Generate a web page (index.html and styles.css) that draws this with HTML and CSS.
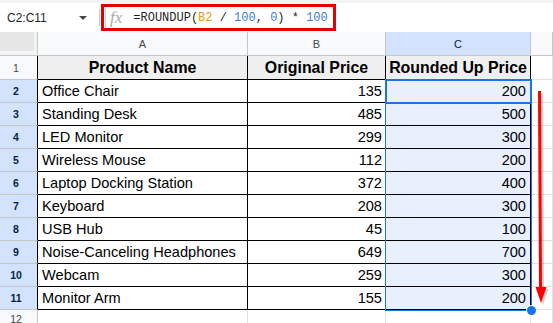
FILE: index.html
```html
<!DOCTYPE html>
<html>
<head>
<meta charset="utf-8">
<link rel="stylesheet" href="styles.css">
</head>
<body>
<div class="strip"></div>
<div class="fbar">
  <div class="namebox"><span class="ref">C2:C11</span><span class="caret"></span></div>
  <div class="sep"></div>
  <div class="formula">
    <span class="fsep"></span>
    <span class="fx">fx</span>
    <span class="expr">=ROUNDUP(<span class="ro">B2</span> / <span class="num">100</span>, <span class="num">0</span>) * <span class="num">100</span></span>
  </div>
</div>
<div class="sheet">
  <div class="corner"></div><div class="ch">A</div><div class="ch">B</div><div class="ch sel">C</div><div class="ch"></div>

  <div class="rh">1</div><div class="c hd">Product Name</div><div class="c hd">Original Price</div><div class="c hd">Rounded Up Price</div><div class="e"></div>

  <div class="rh sel">2</div><div class="c">Office Chair</div><div class="c n">135</div><div class="c n s">200</div><div class="e"></div>
  <div class="rh sel">3</div><div class="c">Standing Desk</div><div class="c n">485</div><div class="c n s">500</div><div class="e"></div>
  <div class="rh sel">4</div><div class="c">LED Monitor</div><div class="c n">299</div><div class="c n s">300</div><div class="e"></div>
  <div class="rh sel">5</div><div class="c">Wireless Mouse</div><div class="c n">112</div><div class="c n s">200</div><div class="e"></div>
  <div class="rh sel">6</div><div class="c">Laptop Docking Station</div><div class="c n">372</div><div class="c n s">400</div><div class="e"></div>
  <div class="rh sel">7</div><div class="c">Keyboard</div><div class="c n">208</div><div class="c n s">300</div><div class="e"></div>
  <div class="rh sel">8</div><div class="c">USB Hub</div><div class="c n">45</div><div class="c n s">100</div><div class="e"></div>
  <div class="rh sel">9</div><div class="c">Noise-Canceling Headphones</div><div class="c n">649</div><div class="c n s">700</div><div class="e"></div>
  <div class="rh sel">10</div><div class="c">Webcam</div><div class="c n">259</div><div class="c n s">300</div><div class="e"></div>
  <div class="rh sel">11</div><div class="c">Monitor Arm</div><div class="c n">155</div><div class="c n s">200</div><div class="e"></div>

  <div class="rh last">12</div><div class="e"></div><div class="e"></div><div class="e"></div><div class="e"></div>

  <div class="range"></div>
  <div class="active"></div>
  <div class="handle"></div>
  <svg class="arrow" width="23" height="220" viewBox="0 0 23 220">
    <g fill="rgba(0,0,0,0.18)">
      <polygon points="10,5 13,5 14,201 11,201"/>
      <polygon points="7.5,201 18.5,201 13,217"/>
    </g>
    <g fill="#f00">
      <polygon points="8,3 11,3 12,200 9,200"/>
      <polygon points="5.5,199 16.5,199 11,215"/>
    </g>
  </svg>
</div>
</body>
</html>
```

FILE: styles.css
```css
html, body {
  margin: 0;
  padding: 0;
  background: #fff;
}
body {
  width: 553px;
  height: 323px;
  overflow: hidden;
  font-family: "Liberation Sans", Arial, sans-serif;
  color: #000;
}
.strip {
  height: 3px;
  background: #f1f3f4;
}
.fbar {
  height: 29px;
  display: flex;
  align-items: flex-start;
  background: #fff;
}
.namebox {
  width: 99px;
  height: 29px;
  box-sizing: border-box;
  padding: 0 12px 0 7px;
  display: flex;
  align-items: center;
}
.ref {
  font-size: 12px;
  color: #1f1f1f;
}
.caret {
  margin-left: auto;
  width: 0;
  height: 0;
  border-left: 4px solid transparent;
  border-right: 4px solid transparent;
  border-top: 4px solid #444746;
}
.sep {
  width: 1px;
  height: 17px;
  margin-top: 6px;
  background: #c4c7c5;
}
.formula {
  margin-left: 1px;
  margin-top: 1px;
  width: 235px;
  height: 27px;
  box-sizing: border-box;
  border: 3px solid #e20000;
  display: flex;
  align-items: center;
}
.fsep {
  width: 1px;
  height: 21px;
  margin-left: 1px;
  background: #d0d0d0;
}
.fx {
  margin-left: 4px;
  font-family: "Liberation Serif", "Times New Roman", serif;
  font-style: italic;
  font-size: 17px;
  color: #a9a9a9;
  line-height: 21px;
}
.expr {
  margin-left: 11px;
  font-family: "Liberation Mono", "Courier New", monospace;
  font-size: 12px;
  color: #1f1f1f;
  white-space: pre;
}
.ro { color: #f0961e; }
.num { color: #3d7bd9; }

.sheet {
  position: relative;
  display: grid;
  grid-template-columns: 38px 210px 138px 145px 1fr;
  grid-template-rows: 24px 24px repeat(10, 23px) 23px;
}
.sheet > div {
  box-sizing: border-box;
  overflow: hidden;
  white-space: nowrap;
}
.corner {
  background: #e6e6e6;
  border-right: 1px solid #c4c7c5;
  border-bottom: 1px solid #c4c7c5;
  box-shadow: inset -3px -4px 0 #f3f3f3;
}
.ch {
  background: #f8f9fa;
  border-right: 1px solid #c4c7c5;
  border-bottom: 1px solid #c4c7c5;
  font-size: 11px;
  color: #444746;
  display: flex;
  align-items: center;
  justify-content: center;
}
.ch.sel {
  background: #d3e3fd;
  color: #041e49;
}
.rh {
  background: #f8f9fa;
  border-right: 1px solid #000;
  border-bottom: 1px solid #c4c7c5;
  font-size: 10.5px;
  color: #444746;
  display: flex;
  align-items: center;
  justify-content: center;
  padding-right: 5px;
}
.rh.sel {
  background: #d3e3fd;
  color: #041e49;
  font-weight: bold;
}
.rh.last {
  border-right-color: #c4c7c5;
  align-items: flex-start;
  padding-top: 3px;
}
.c {
  border-right: 1px solid #000;
  border-bottom: 1px solid #000;
  padding: 0 3px 0 4px;
  font-size: 14.6px;
  display: flex;
  align-items: center;
}
.c.hd {
  background: #efefef;
  font-weight: bold;
  font-size: 15.9px;
  justify-content: center;
  padding: 0;
}
.c.n {
  justify-content: flex-end;
}
.c.s {
  background: #e8f0fe;
  padding-right: 4px;
}
.e {
  border-right: 1px solid #e1e1e1;
  border-bottom: 1px solid #e1e1e1;
}
.range {
  position: absolute;
  left: 385px;
  top: 47px;
  width: 147px;
  height: 232px;
  box-sizing: border-box;
  border: 1px solid #1a73e8;
  pointer-events: none;
}
.active {
  position: absolute;
  left: 385px;
  top: 47px;
  width: 147px;
  height: 25px;
  box-sizing: border-box;
  border: 2px solid #1a73e8;
}
.handle {
  position: absolute;
  left: 527px;
  top: 274px;
  width: 9px;
  height: 9px;
  border-radius: 50%;
  background: #1a73e8;
  box-shadow: 0 0 0 1px #fff;
}
.arrow {
  position: absolute;
  left: 530px;
  top: 56px;
}
```
